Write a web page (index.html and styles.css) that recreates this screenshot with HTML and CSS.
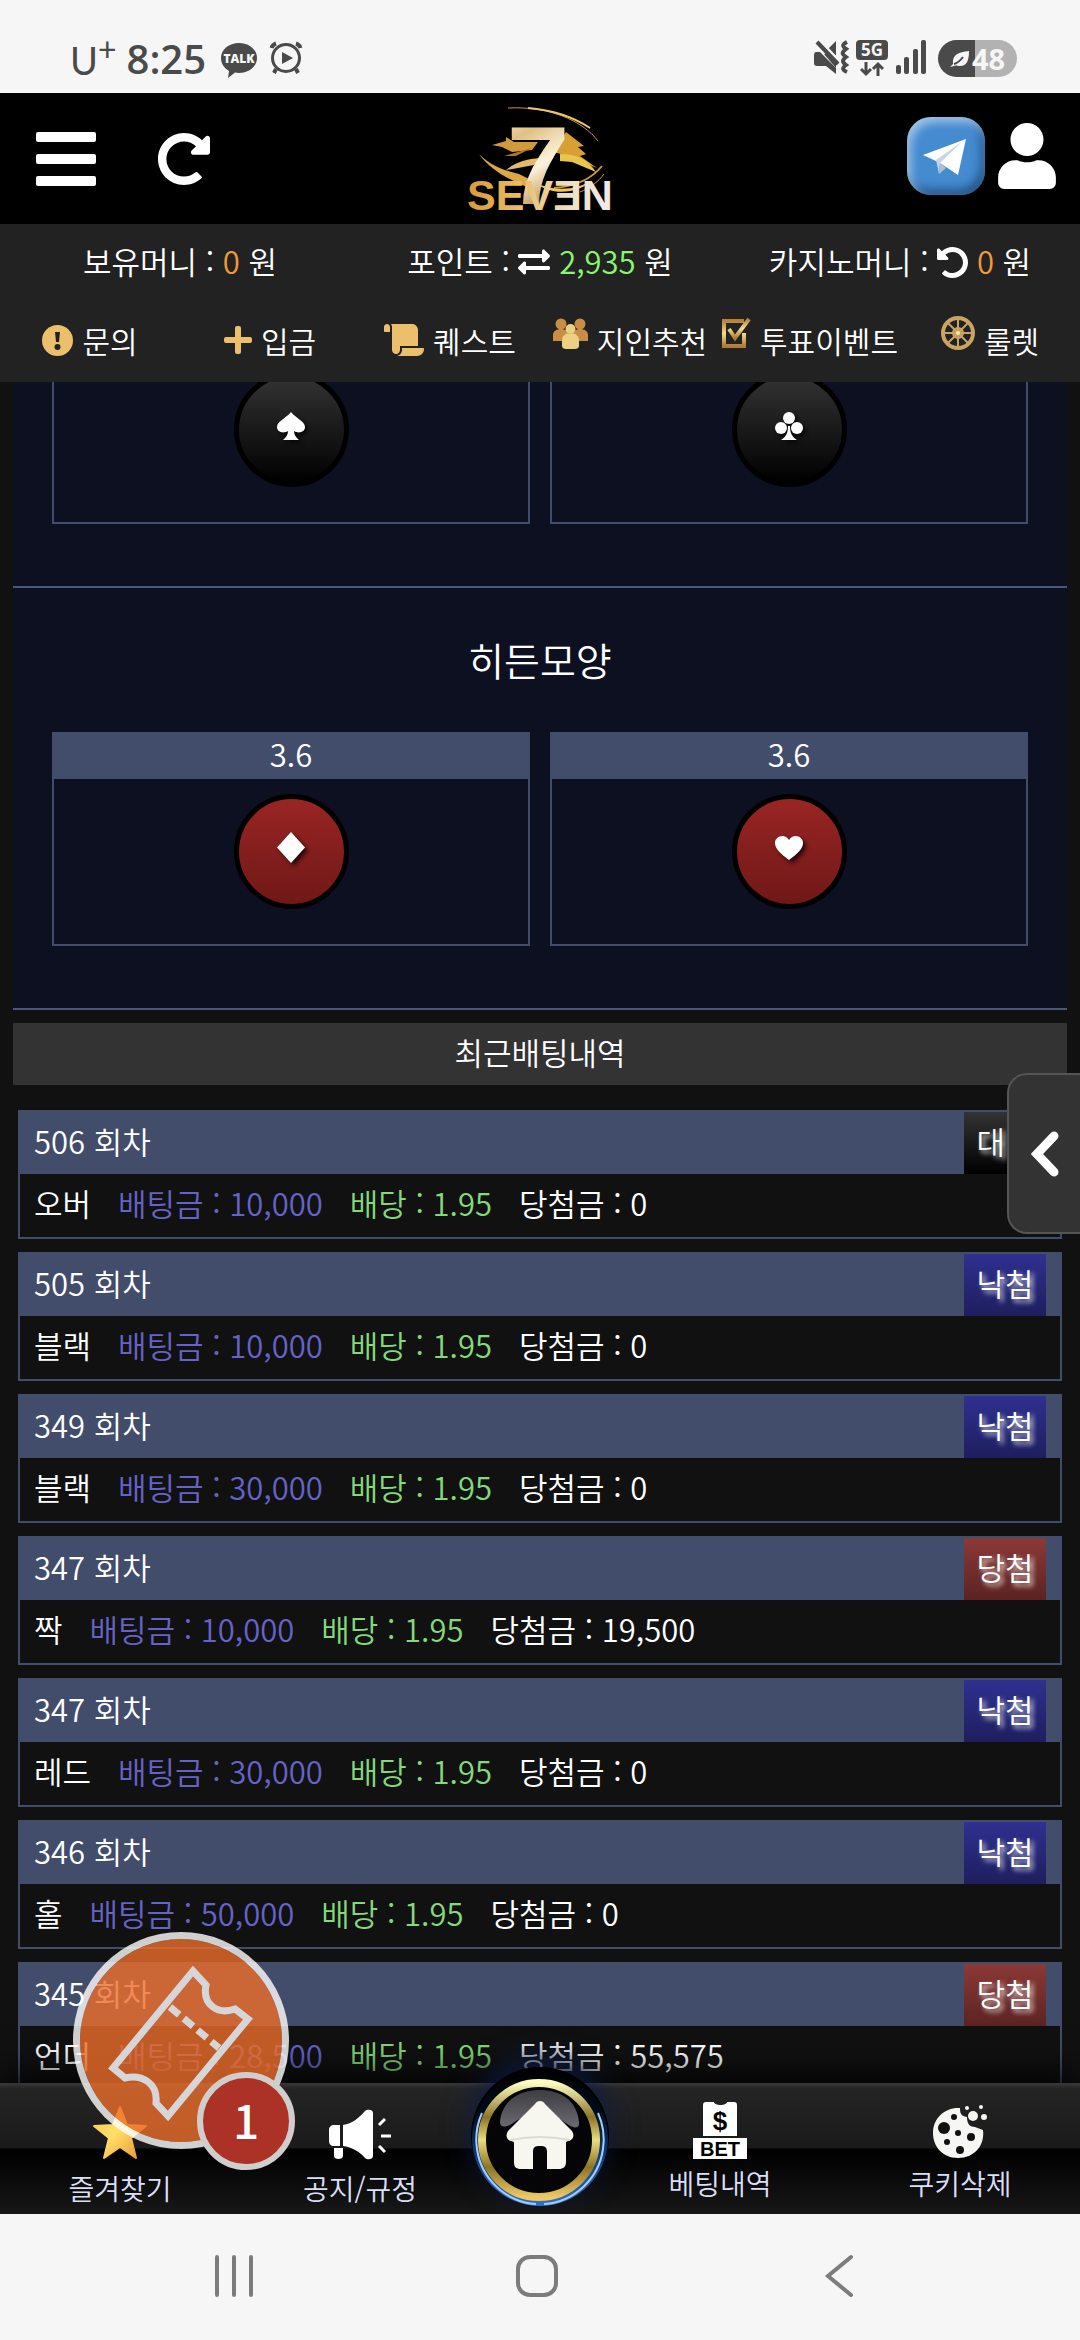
FILE: index.html
```html
<!DOCTYPE html>
<html lang="ko">
<head>
<meta charset="utf-8">
<meta name="viewport" content="width=device-width, initial-scale=1">
<title>SEVEN</title>
<link rel="stylesheet" href="styles.css">
</head>
<body>
<svg class="defs" width="0" height="0" aria-hidden="true">
  <defs>
    <linearGradient id="gold" x1="0" y1="0" x2="0" y2="1">
      <stop offset="0" stop-color="#b98238"/><stop offset=".5" stop-color="#f3dc8c"/><stop offset="1" stop-color="#b07a34"/>
    </linearGradient>
    <linearGradient id="goldText" x1="0" y1="0" x2="1" y2="0">
      <stop offset="0" stop-color="#d9973a"/><stop offset=".35" stop-color="#e9bd62"/><stop offset=".7" stop-color="#efe0c4"/><stop offset="1" stop-color="#f1ecec"/>
    </linearGradient>
    <linearGradient id="goldSeven" x1="0" y1="0" x2=".3" y2="1">
      <stop offset="0" stop-color="#fff6e4"/><stop offset=".3" stop-color="#e0c084"/><stop offset=".6" stop-color="#fdf3dc"/><stop offset="1" stop-color="#a87528"/>
    </linearGradient>
    <linearGradient id="ring" x1="0" y1="0" x2="0" y2="1">
      <stop offset="0" stop-color="#fdfdc0"/><stop offset=".3" stop-color="#8d7524"/><stop offset=".5" stop-color="#eadc80"/><stop offset=".74" stop-color="#8d7524"/><stop offset="1" stop-color="#ecc868"/>
    </linearGradient>
    <linearGradient id="blueRim" x1="0" y1="0" x2="0" y2="1">
      <stop offset="0" stop-color="#000"/><stop offset=".3" stop-color="#020b1c"/><stop offset=".6" stop-color="#0c3872"/><stop offset="1" stop-color="#2f6fc8"/>
    </linearGradient>
    <linearGradient id="gloss" x1="0" y1="0" x2="0" y2="1">
      <stop offset="0" stop-color="#3e3d42"/><stop offset="1" stop-color="#6b6a70"/>
    </linearGradient>
    <linearGradient id="star" x1="0" y1="0" x2="1" y2="1">
      <stop offset="0" stop-color="#ffc24a"/><stop offset=".45" stop-color="#ffe06a"/><stop offset="1" stop-color="#e9902a"/>
    </linearGradient>
  </defs>
</svg>
<div class="screen">

  <div class="status">
    <div class="status__group">
      <span class="status__carrier">U<sup>+</sup></span>
      <span class="status__time">8:25</span>
      <svg class="status__talk" width="38" height="36" viewBox="0 0 38 36"><path fill="#4a4a4a" d="M19 1c10 0 18 6.500 18 15s-8 15-18 15l-4-.4L8 36l1-7C4 26 1 21.500 1 16 1 7.500 9 1 19 1z"/><text x="19" y="21" text-anchor="middle" class="status__talktext">TALK</text></svg>
      <svg width="32" height="32" viewBox="0 0 32 32" fill="none" stroke="#4a4a4a" stroke-width="3"><circle cx="16" cy="16" r="13.500"/><path d="M1.500 6A7 7 0 0 1 6 1.500M30.500 6A7 7 0 0 0 26 1.500M6 27l-2 4M26 27l2 4" stroke-width="4"/><path d="M12 10l11 6-11 6z" fill="#4a4a4a" stroke="none"/></svg>
    </div>
    <div class="status__group status__group--right">
      <svg width="34" height="34" viewBox="0 0 34 34"><path fill="#4a4a4a" d="M2 12h4L22 28v6l-10-8H3c-2 0-3-1-3-3v-8c0-2 1-3 2-3zM22 1v17l-8-9z"/><path d="M10 14l12-3v17z" fill="#4a4a4a"/><path d="M7 2l20 21" stroke="#f6f6f6" stroke-width="3"/><path d="M3 2l21 22" stroke="#4a4a4a" stroke-width="4"/><path d="M33 2c-6 3-4 5-1 7-5 4-4 5 0 8-4 3-4 5 0 8-4 3-4 5 1 7" fill="none" stroke="#4a4a4a" stroke-width="4"/></svg>
      <svg width="32" height="36" viewBox="0 0 32 36"><rect width="32" height="20" rx="4" fill="#4a4a4a"/><text x="16" y="16" text-anchor="middle" class="status__net">5G</text><path d="M10 22v12M5 29l5 5 5-5M22 36V24M17 29l5-5 5 5" fill="none" stroke="#4a4a4a" stroke-width="3"/></svg>
      <svg width="30" height="34" viewBox="0 0 30 34" fill="#4a4a4a"><rect y="25" width="5" height="9" rx="2"/><rect x="8" y="17" width="5" height="17" rx="2"/><rect x="17" y="9" width="5" height="25" rx="2"/><rect x="25" width="5" height="34" rx="2"/></svg>
      <span class="battery"><svg width="20" height="18" viewBox="0 0 20 18"><path fill="#f6f6f6" d="M19 1c0 9-2 15-9 15-3 0-4-1-6 0l-4 1 3-3C2 5 8 2 19 1z"/><path d="M4 14c4-1 6-3 9-7" fill="none" stroke="#4a4a4a" stroke-width="2"/></svg>48</span>
    </div>
  </div>

  <header class="topbar">
    <div class="topbar__left">
      <button class="icon-btn" aria-label="메뉴"><svg width="60" height="54" viewBox="0 0 60 54" fill="#fff"><rect width="60" height="10" rx="2"/><rect y="22" width="60" height="10" rx="2"/><rect y="44" width="60" height="10" rx="2"/></svg></button>
      <button class="icon-btn" aria-label="새로고침"><svg width="52" height="52" viewBox="8 8 496 496"><g transform="matrix(-1 0 0 1 512 0)"><path fill="#fff" d="M255.545 8c-66.269.119-126.438 26.233-170.860 68.685L48.971 40.971C33.851 25.851 8 36.559 8 57.941V192c0 13.255 10.745 24 24 24h134.059c21.382 0 32.090-25.851 16.971-40.971l-41.750-41.750c30.864-28.899 70.801-44.907 113.230-45.273 92.398-.798 170.283 73.977 169.484 169.442C423.236 348.009 349.816 424 256 424c-41.127 0-79.997-14.678-110.630-41.556-4.743-4.161-11.906-3.908-16.368.553L89.340 422.659c-4.872 4.872-4.631 12.815.482 17.433C133.798 479.813 192.074 504 256 504c136.966 0 247.999-111.033 248-247.998C504.001 119.193 392.354 7.755 255.545 8z"/></g></svg></button>
    </div>
    <a class="logo" href="#" aria-label="SEVEN">
      <svg width="148" height="110" viewBox="0 0 148 110">
        <g fill="none" stroke="#c8973c">
          <path d="M42 4c40-2 74 12 90 33" stroke-width="1"/><path d="M62 4c24 2 44 8 62 20" stroke-width="2" stroke="#eec56a"/>
          <path d="M136 62c-8 10-22 20-48 22" stroke-width="2"/><path d="M138 70c-6 8-14 14-24 18" stroke-width="1"/>
        </g>
        <path fill="#cf9a3c" d="M26 41l14-4v-4l8 5h24l-6 8-20 2-10-5z"/>
        <path fill="#a87528" d="M38 52l28-8-16 8z"/>
        <path fill="#dba93f" d="M13 50c12 12 24 16 40 20l20 10-12 3C44 76 24 66 13 50z"/>
        <path fill="#e3ba66" d="M40 66c10-8 20-11 34-12l-6 7-16 3z"/>
        <path fill="#d8a034" d="M100 28l18 14-6 1 8 7-6 2 17 12-36-14-8-2z"/>
        <path fill="#e8c64e" d="M94 50c18 0 28 6 36 18l-24-10-12-1z"/>
        <text x="41" y="100" class="logo__seven" fill="url(#goldSeven)">7</text>
        <path fill="#f0c85a" d="M70 79c18 9 42 7 56-3-12 13-40 17-56 3z"/>
        <text x="74" y="106" text-anchor="middle" class="logo__name" fill="url(#goldText)">SEVƎN</text>
      </svg>
    </a>
    <div class="topbar__right">
      <a class="telegram" href="#" aria-label="텔레그램"><svg width="78" height="78" viewBox="0 0 78 78"><path fill="#fff" d="M16 38l43-16-8 36-18-12-4-2z"/><path fill="#c6d6e6" d="M29 43l27-19-23 22-1 11z"/><path fill="#a9c0d6" d="M32 57l1-11 6 5z"/></svg></a>
      <button class="icon-btn" aria-label="내 정보"><svg width="58" height="66" viewBox="0 0 448 512"><path fill="#fff" d="M224 256c70.700 0 128-57.300 128-128S294.700 0 224 0 96 57.300 96 128s57.300 128 128 128zm89.600 32h-16.700c-22.200 10.200-46.900 16-72.900 16s-50.600-5.800-72.900-16h-16.700C60.200 288 0 348.200 0 422.400V464c0 26.500 21.500 48 48 48h352c26.500 0 48-21.500 48-48v-41.600c0-74.200-60.200-134.400-134.400-134.400z"/></svg></button>
    </div>
  </header>

  <section class="account">
    <div class="balances">
      <div>보유머니 : <span class="amount">0</span> 원</div>
      <div>포인트 : <svg width="32" height="32" viewBox="0 0 512 512"><path fill="#fff" d="M0 168v-16c0-13.255 10.745-24 24-24h360V80c0-21.367 25.899-32.042 40.971-16.971l80 80c9.372 9.373 9.372 24.569 0 33.941l-80 80C409.956 271.982 384 261.456 384 240v-48H24c-13.255 0-24-10.745-24-24zm488 152H128v-48c0-21.314-25.862-32.080-40.971-16.971l-80 80c-9.372 9.373-9.372 24.569 0 33.941l80 80C102.057 463.997 128 453.437 128 432v-48h360c13.255 0 24-10.745 24-24v-16c0-13.255-10.745-24-24-24z"/></svg> <span class="amount amount--point">2,935</span> 원</div>
      <div>카지노머니 : <svg width="31" height="31" viewBox="8 8 496 496"><path fill="#fff" d="M255.545 8c-66.269.119-126.438 26.233-170.860 68.685L48.971 40.971C33.851 25.851 8 36.559 8 57.941V192c0 13.255 10.745 24 24 24h134.059c21.382 0 32.090-25.851 16.971-40.971l-41.750-41.750c30.864-28.899 70.801-44.907 113.230-45.273 92.398-.798 170.283 73.977 169.484 169.442C423.236 348.009 349.816 424 256 424c-41.127 0-79.997-14.678-110.630-41.556-4.743-4.161-11.906-3.908-16.368.553L89.340 422.659c-4.872 4.872-4.631 12.815.482 17.433C133.798 479.813 192.074 504 256 504c136.966 0 247.999-111.033 248-247.998C504.001 119.193 392.354 7.755 255.545 8z"/></svg> <span class="amount">0</span> 원</div>
    </div>
    <nav class="quick">
      <a href="#"><svg width="31" height="31" viewBox="0 0 31 31"><circle cx="15.500" cy="15.500" r="15.500" fill="#ebbf6b"/><path d="M13 7h5l-1 10h-3z" fill="#222"/><circle cx="15.500" cy="22" r="3" fill="#222"/></svg>문의</a>
      <a href="#"><svg width="28" height="28" viewBox="0 0 28 28" fill="#ebbf6b"><rect y="11" width="28" height="6" rx="2"/><rect x="11" width="6" height="28" rx="2"/></svg>입금</a>
      <a href="#"><svg width="40" height="32" viewBox="0 0 640 512"><path fill="#ebbf6b" d="M48 0C21.530 0 0 21.530 0 48v64c0 8.840 7.160 16 16 16h80V48C96 21.530 74.470 0 48 0zm208 412.570V352h288V96c0-52.940-43.060-96-96-96H111.590C121.740 13.410 128 29.920 128 48v368c0 38.870 34.650 69.650 74.750 63.120C234.220 474 256 444.460 256 412.570zM288 384v32c0 52.930-43.060 96-96 96h336c61.860 0 112-50.140 112-112 0-8.840-7.160-16-16-16H288z"/></svg>퀘스트</a>
      <a class="quick__raised" href="#"><svg width="35" height="31" viewBox="0 0 35 31"><g fill="#c98d45"><circle cx="8" cy="6" r="5.500"/><circle cx="27" cy="6" r="5.500"/><path d="M0 23v-6c0-4 4-6 8-6s7 2 7 6v6zM20 23v-6c0-4 3-6 7-6s8 2 8 6v6z"/></g><g fill="#ecd083"><circle cx="17.500" cy="11" r="5"/><path d="M9 28v-5c0-5 3-8 8.500-8s8.500 3 8.500 8v5c0 2-2 3-4 3h-9c-2 0-4-1-4-3z"/></g></svg>지인추천</a>
      <a class="quick__raised" href="#"><svg width="29" height="31" viewBox="0 0 29 31" fill="none" stroke="url(#gold)"><path d="M22 15v13H2V3h20" stroke-width="4"/><path d="M7 11l6 9L27 1" stroke-width="4"/></svg>투표이벤트</a>
      <a class="quick__raised" href="#"><svg width="34" height="34" viewBox="0 0 34 34" fill="none" stroke="#c9a463" stroke-width="2"><circle cx="17" cy="17" r="15" stroke-width="4"/><circle cx="17" cy="17" r="5" fill="#a98649"/><path d="M17 2v30M2 17h30M6 6l22 22M28 6L6 28"/><circle cx="17" cy="17" r="2" fill="#f7e8a0" stroke="none"/></svg>룰렛</a>
    </nav>
  </section>

  <main class="content">
    <section class="panel panel--scrolled">
      <div class="picks">
        <button class="pick" aria-label="스페이드"><span class="pick__body"><span class="chip chip--black"><svg width="28" height="28" viewBox="0 0 28 28"><path fill="#fff" d="M14 0c3 5 14 9 14 15 0 5-6 7-11 4 0 4 2 6 5 9H6c3-3 5-5 5-9-5 3-11 1-11-4C0 9 11 5 14 0z"/></svg></span></span></button>
        <button class="pick" aria-label="클로버"><span class="pick__body"><span class="chip chip--black"><svg width="28" height="28" viewBox="0 0 28 28" fill="#fff"><circle cx="14" cy="6" r="6"/><circle cx="6" cy="16" r="6"/><circle cx="22" cy="16" r="6"/><path d="M13 14h2c0 7 2 11 7 14H6c5-3 7-7 7-14z"/></svg></span></span></button>
      </div>
    </section>

    <section class="panel">
      <h2 class="panel__title">히든모양</h2>
      <div class="picks">
        <button class="pick" aria-label="다이아몬드 3.6"><span class="pick__odds">3.6</span><span class="pick__body"><span class="chip chip--red"><svg width="28" height="31" viewBox="0 0 28 31"><path fill="#fff" d="M14 0l14 15.500L14 31 0 15.500z"/></svg></span></span></button>
        <button class="pick" aria-label="하트 3.6"><span class="pick__odds">3.6</span><span class="pick__body"><span class="chip chip--red"><svg width="28" height="24" viewBox="0 0 28 24"><path fill="#fff" d="M14 24C6 18 0 13 0 7c0-7 10-10 14-3 4-7 14-4 14 3 0 6-6 11-14 17z"/></svg></span></span></button>
      </div>
    </section>

    <section class="history">
      <h2 class="history__title">최근배팅내역</h2>
      <ul class="bets">
        <li class="bet"><div class="bet__head">506 회차<span class="result result--wait">대기</span></div><div class="bet__body"><span>오버</span><span class="stake">배팅금 : 10,000</span><span class="odds">배당 : 1.95</span><span>당첨금 : 0</span></div></li>
        <li class="bet"><div class="bet__head">505 회차<span class="result result--lose">낙첨</span></div><div class="bet__body"><span>블랙</span><span class="stake">배팅금 : 10,000</span><span class="odds">배당 : 1.95</span><span>당첨금 : 0</span></div></li>
        <li class="bet"><div class="bet__head">349 회차<span class="result result--lose">낙첨</span></div><div class="bet__body"><span>블랙</span><span class="stake">배팅금 : 30,000</span><span class="odds">배당 : 1.95</span><span>당첨금 : 0</span></div></li>
        <li class="bet"><div class="bet__head">347 회차<span class="result result--win">당첨</span></div><div class="bet__body"><span>짝</span><span class="stake">배팅금 : 10,000</span><span class="odds">배당 : 1.95</span><span>당첨금 : 19,500</span></div></li>
        <li class="bet"><div class="bet__head">347 회차<span class="result result--lose">낙첨</span></div><div class="bet__body"><span>레드</span><span class="stake">배팅금 : 30,000</span><span class="odds">배당 : 1.95</span><span>당첨금 : 0</span></div></li>
        <li class="bet"><div class="bet__head">346 회차<span class="result result--lose">낙첨</span></div><div class="bet__body"><span>홀</span><span class="stake">배팅금 : 50,000</span><span class="odds">배당 : 1.95</span><span>당첨금 : 0</span></div></li>
        <li class="bet"><div class="bet__head">345 회차<span class="result result--win">당첨</span></div><div class="bet__body"><span>언더</span><span class="stake">배팅금 : 28,500</span><span class="odds">배당 : 1.95</span><span>당첨금 : 55,575</span></div></li>
      </ul>
    </section>

    <button class="drawer" aria-label="열기"><svg width="28" height="46" viewBox="0 0 28 46"><path d="M23 5L6 23l17 18" fill="none" stroke="#fff" stroke-width="9" stroke-linecap="round"/></svg></button>
  </main>

  <nav class="tabs">
    <a class="tab tab--low" href="#"><span class="tab__icon"><svg width="54" height="53" viewBox="0 0 54 53"><path fill="url(#star)" stroke="url(#star)" stroke-width="2" stroke-linejoin="round" d="M27 1l7 18 19 1-15 12 5 20-16-11-16 11 5-20L1 20l19-1z"/></svg></span>즐겨찾기</a>
    <a class="tab tab--low" href="#"><span class="tab__icon"><svg width="62" height="49" viewBox="0 0 62 49"><path fill="#fff" d="M5 15h6v21H5c-3 0-5-2-5-5V20c0-3 2-5 5-5zM5 38h9v8c0 4-9 4-9 0zM14 15c9-1 17-8 22-14 2-2 8-2 8 2v43c0 4-6 4-8 2-5-6-13-11-22-12z"/><path d="M50 15l6-6M52 26h10M50 36l6 6" stroke="#fff" stroke-width="3"/></svg></span>공지/규정</a>
    <a class="home" href="#" aria-label="홈">
      <svg width="140" height="150" viewBox="0 0 140 150">
        <circle cx="70" cy="78" r="69" fill="#000"/>
        <circle cx="70" cy="80" r="68" fill="url(#blueRim)"/>
        <path d="M12 55a64 64 0 0 0-5 36A64 64 0 0 0 66 146M128 55a64 64 0 0 1 5 36A64 64 0 0 1 74 146" fill="none" stroke="#a9cdf2" stroke-width="2"/>
        <circle cx="69" cy="82" r="57" fill="#050508" stroke="url(#ring)" stroke-width="8"/>
        <path d="M30 64C32 42 50 32 70 32s37 10 39 32c1 10-10 4-16-1L70 50 46 63c-6 5-16 9-16 1z" fill="url(#gloss)"/>
        <path d="M70 43c2 0 4 1 5 3l26 26c4 4 3 10-3 11l-2 1v20c0 5-3 7-7 7H77V94c0-5-2-6-7-6s-7 1-7 6v17H51c-5 0-7-2-7-7V84l-3-1c-5-1-6-7-2-11l26-26c1-2 3-3 5-3z" fill="#f7f7f0"/>
        <path d="M40 82c20-4 40-4 60 0" fill="none" stroke="#dcdcd2" stroke-width="2"/>
      </svg>
    </a>
    <a class="tab" href="#"><span class="tab__icon"><svg width="54" height="58" viewBox="0 0 54 58"><path fill="#fff" d="M13 1h8c0 4 13 4 13 0h7c2 0 3 1 3 3v31H10V4c0-2 1-3 3-3zM0 37h54v21H0z"/><text x="27" y="29" text-anchor="middle" class="tab__dollar">$</text><text x="27" y="55" text-anchor="middle" class="tab__bet">BET</text></svg></span>베팅내역</a>
    <a class="tab" href="#"><span class="tab__icon"><svg width="54" height="55" viewBox="0 0 54 55" fill="#f6f6f2"><path d="M27 4c0 8 3 8 7 9 0 6 2 10 8 10l8 3c2 16-9 28-25 28C10 54 0 43 0 29 0 14 12 3 27 4z"/><circle cx="40" cy="12" r="5"/><circle cx="34" cy="4" r="2"/><circle cx="48" cy="3" r="2"/><circle cx="51" cy="13" r="3"/><g fill="#111"><circle cx="11" cy="24" r="6"/><circle cx="21" cy="13" r="3"/><circle cx="25" cy="29" r="3"/><circle cx="38" cy="33" r="4"/><circle cx="14" cy="38" r="3"/><circle cx="27" cy="46" r="4"/></g></svg></span>쿠키삭제</a>
  </nav>

  <button class="slip" aria-label="배팅슬립 1">
    <svg width="202" height="202" viewBox="7 7 202 202" fill="none" stroke="#d6d6d8" stroke-width="7"><path d="M120 38l13 14c-4 20 12 30 29 24l13 10-80 97-12-13c2-20-14-29-31-25l-12-10z"/><path d="M97 74l49 41" stroke-dasharray="12 6"/></svg>
    <span class="slip__count">1</span>
  </button>

  <div class="sysnav">
    <button class="icon-btn" aria-label="최근 앱"><svg width="38" height="42" viewBox="0 0 38 42"><path d="M2 2v38M19 2v38M36 2v38" stroke="#7c7c7c" stroke-width="4" stroke-linecap="round"/></svg></button>
    <button class="icon-btn" aria-label="홈 화면"><svg width="42" height="42" viewBox="0 0 42 42"><rect x="2" y="2" width="38" height="38" rx="12" fill="none" stroke="#7c7c7c" stroke-width="4"/></svg></button>
    <button class="icon-btn" aria-label="뒤로"><svg width="27" height="42" viewBox="0 0 27 42"><path d="M25 2L2 21l23 19" fill="none" stroke="#7c7c7c" stroke-width="4" stroke-linecap="round"/></svg></button>
  </div>
</div>
</body>
</html>
```
FILE: styles.css
```css
* { box-sizing: border-box; }

body {
  margin: 0;
  background: #111;
  color: #fff;
  font-family: "Noto Sans CJK KR", sans-serif;
  font-size: 31px;
  font-weight: 350;
  line-height: 46px;
}

a { color: inherit; text-decoration: none; }
button { font: inherit; color: inherit; padding: 0; border: 0; background: none; }
svg { display: block; flex: none; overflow: visible; }
h2, ul { margin: 0; padding: 0; font-weight: inherit; list-style: none; }
.defs { position: absolute; }
.icon-btn { display: flex; }

.screen {
  position: relative;
  display: flex;
  flex-direction: column;
  height: 100vh;
  overflow: hidden;
}

/* Device status bar */
.status {
  flex: none;
  display: flex;
  justify-content: space-between;
  padding: 24px 63px 0 70px;
  height: 93px;
  background: #f6f6f6;
  color: #4a4a4a;
  font-family: "Open Sans", sans-serif;
}
.status__group { display: flex; align-items: flex-start; gap: 10px; padding-top: 18px; }
.status__carrier { font-size: 38px; line-height: 36px; font-family: Lato, sans-serif; font-weight: 400; }
.status__carrier sup { font-size: 32px; line-height: 0; }
.status__time { font-size: 40px; font-weight: 600; line-height: 34px; }
.status__talk { margin: 0 2px 0 4px; }
.status__talktext { font: 800 12px "Open Sans", sans-serif; fill: #f6f6f6; }
.status__group--right { gap: 8px; padding-top: 16px; }
.status__net { font: 700 17px/17px "Open Sans", sans-serif; fill: #f6f6f6; }
.battery {
  display: flex;
  align-items: center;
  justify-content: center;
  gap: 2px;
  width: 79px;
  height: 37px;
  margin-left: 4px;
  border-radius: 19px;
  background: linear-gradient(90deg, #4a4a4a 37px, #b2b2b2 37px);
  color: #f6f6f6;
  font-size: 29px;
  font-weight: 700;
}

/* Site header */
.topbar {
  flex: none;
  display: grid;
  grid-template-columns: 1fr auto 1fr;
  align-items: center;
  height: 131px;
  padding: 0 24px 0 36px;
  background: #000;
}
.topbar__left { display: flex; align-items: center; gap: 62px; }
.topbar__right { display: flex; align-items: center; justify-content: flex-end; gap: 13px; padding-bottom: 6px; }
.logo { margin-right: 12px; }
.logo__seven { font: 700 112px "Liberation Sans", sans-serif; }
.logo__name { font: 700 43px "Liberation Sans", sans-serif; }
.telegram {
  border-radius: 24px;
  background: #458bd0;
  box-shadow: inset 4px 5px 10px rgba(255, 255, 255, .5), inset -4px -6px 10px rgba(10, 50, 90, .6);
}

/* Balances and quick links */
.account { flex: none; height: 158px; background: #222; padding-top: 14px; }
.balances { display: grid; grid-template-columns: repeat(3, 1fr); text-align: center; white-space: nowrap; }
.balances svg { display: inline-block; vertical-align: -4px; }
.amount { color: #f09a37; }
.amount--point { color: #8cf56e; }
.quick { display: grid; grid-template-columns: repeat(6, 1fr); padding-top: 32px; font-size: 30px; white-space: nowrap; }
.quick a { display: flex; align-items: center; justify-content: center; gap: 9px; }
.quick__raised svg { margin-bottom: 14px; }

/* Scrolling content */
.content { position: relative; flex: 1; min-height: 0; overflow: hidden; }
.panel { margin: 0 13px; padding: 0 39px 62px; background: #0d1020; border-bottom: 2px solid #4a5679; }
.panel--scrolled { margin-top: -25px; }
.panel__title { font-size: 39px; line-height: 142px; height: 144px; text-align: center; }
.picks { display: grid; grid-template-columns: 1fr 1fr; gap: 20px; }
.pick { display: flex; flex-direction: column; border: 2px solid #424c6b; border-top: 0; }
.pick__odds { width: 100%; height: 47px; line-height: 44px; background: #424c6b; }
.pick__body { display: flex; justify-content: center; width: 100%; height: 165px; padding-top: 15px; }
.chip {
  display: flex;
  align-items: center;
  justify-content: center;
  width: 115px;
  height: 115px;
  padding-bottom: 8px;
  border: 5px solid #000;
  border-radius: 50%;
}
.chip svg { filter: drop-shadow(3px 3px 2px rgba(0, 0, 0, .7)); }
.chip--black { background: linear-gradient(#333, #000); }
.chip--red { background: linear-gradient(#982524, #701817); }

.history__title { margin: 13px 13px 0; height: 62px; line-height: 58px; background: #333; font-size: 31px; text-align: center; }
.bets { display: grid; gap: 13px; padding: 25px 18px; }
.bet { border: 2px solid #424c6b; }
.bet__head {
  display: flex;
  justify-content: space-between;
  height: 62px;
  padding: 0 14px;
  background: #424c6b;
  line-height: 58px;
}
.bet__body { display: flex; gap: 27px; height: 63px; padding-left: 14px; line-height: 58px; white-space: nowrap; }
.result { width: 82px; text-align: center; text-shadow: 3px 3px 5px rgba(255, 255, 255, .9); }
.result--wait { background: linear-gradient(#333, #000); }
.result--lose { background: linear-gradient(#2f3090, #1e1e5e); }
.result--win { background: linear-gradient(#8b3937, #5b2322); }
.stake { color: #6663c8; }
.odds { color: #84da78; }

.drawer {
  position: absolute;
  top: 691px;
  right: 0;
  display: flex;
  align-items: center;
  justify-content: center;
  width: 73px;
  height: 161px;
  border: 2px solid #555;
  border-right: 0;
  border-radius: 20px 0 0 20px;
  background: #333;
}

/* Bottom tab bar */
.tabs {
  position: relative;
  flex: none;
  display: grid;
  grid-template-columns: 2fr 2fr 1fr 2fr 2fr;
  height: 131px;
  background: linear-gradient(#39393b 0, #242424 6px, #1a1a1a 65px, #000 66px, #171717 131px);
  box-shadow: 0 -6px 36px #000;
  color: #dcdff8;
  font-size: 28px;
  line-height: 40px;
}
.tab { display: flex; flex-direction: column; align-items: center; gap: 4px; padding-top: 16px; }
.tab--low { gap: 9px; }
.tab__icon { display: flex; align-items: flex-end; height: 60px; }
.tab__dollar { font: 700 26px "Liberation Sans", sans-serif; fill: #000; }
.tab__bet { font: 700 20px "Liberation Sans", sans-serif; fill: #000; }
.home { position: relative; }
.home svg { position: absolute; left: 50%; bottom: 6px; margin-left: -70px; filter: drop-shadow(0 -10px 14px rgba(12, 28, 72, .8)); }

/* Floating bet slip */
.slip {
  position: absolute;
  z-index: 2;
  left: 73px;
  bottom: 191px;
  width: 216px;
  height: 217px;
  border: 7px solid rgba(255, 255, 255, .8);
  border-radius: 50%;
  background: rgba(237, 110, 42, .8) padding-box;
}
.slip__count {
  position: absolute;
  right: -13px;
  bottom: -28px;
  width: 98px;
  height: 98px;
  border: 6px solid #d0cecc;
  border-radius: 50%;
  background: #ac3228;
  font-size: 46px;
  font-weight: 500;
  line-height: 82px;
}

/* Device navigation */
.sysnav {
  position: relative;
  z-index: 1;
  flex: none;
  display: grid;
  grid-template-columns: repeat(3, 1fr);
  place-items: center;
  height: 126px;
  padding: 0 89px 3px 83px;
  background: #f6f6f6;
}
```
